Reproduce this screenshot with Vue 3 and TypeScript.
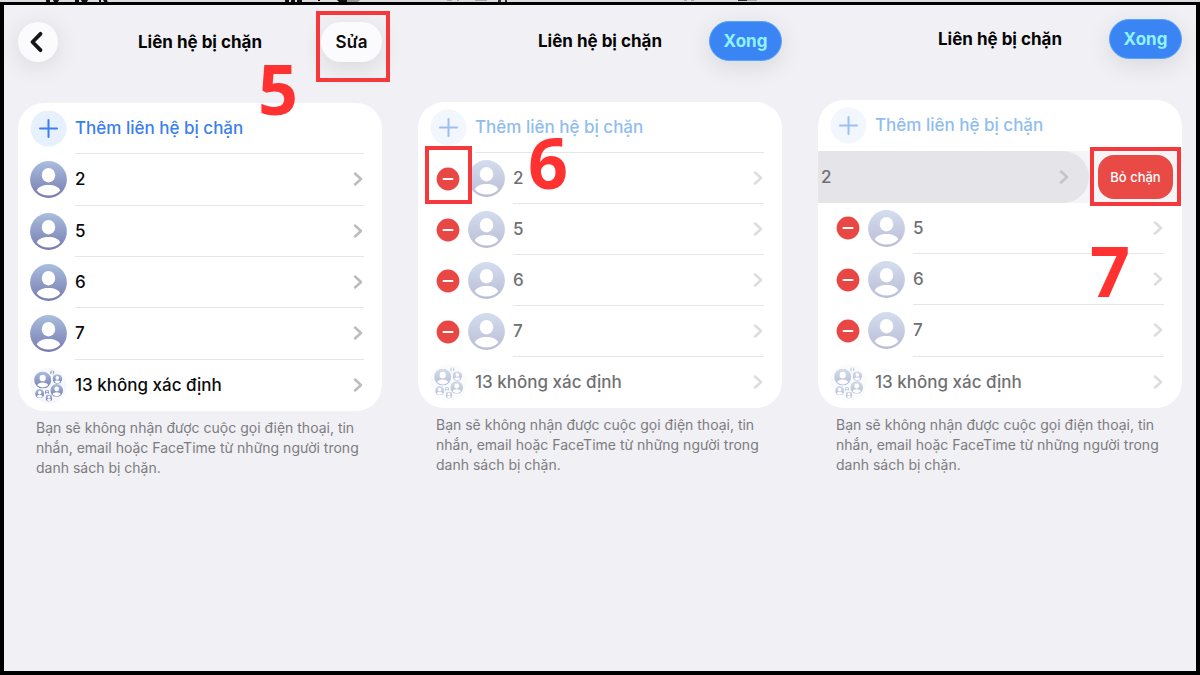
<script setup lang="ts">
interface Contact {
  name: string
  swiped?: boolean
  boxed?: boolean
}

interface Panel {
  id: string
  editing: boolean
  step: string
  contacts: Contact[]
}

interface Bubble {
  x: number
  y: number
  r: number
}

const panels: Panel[] = [
  {
    id: 'view',
    editing: false,
    step: '5',
    contacts: [{ name: '2' }, { name: '5' }, { name: '6' }, { name: '7' }],
  },
  {
    id: 'edit',
    editing: true,
    step: '6',
    contacts: [{ name: '2', boxed: true }, { name: '5' }, { name: '6' }, { name: '7' }],
  },
  {
    id: 'confirm',
    editing: true,
    step: '7',
    contacts: [{ name: '2', swiped: true }, { name: '5' }, { name: '6' }, { name: '7' }],
  },
]

const bubbles: Bubble[] = [
  { x: 12.7, y: 13, r: 8.6 },
  { x: 27.3, y: 12, r: 4.8 },
  { x: 22.3, y: 5.4, r: 2.2 },
  { x: 26.7, y: 23.4, r: 6.4 },
  { x: 9.7, y: 26.7, r: 4.6 },
  { x: 17, y: 25, r: 2.2 },
  { x: 19, y: 31, r: 3.4 },
]
</script>

<template>
  <div class="page">
    <svg class="defs" width="0" height="0" aria-hidden="true">
      <defs>
        <linearGradient id="avatar-fill" x1="0" y1="0" x2="0" y2="1">
          <stop offset="0" stop-color="#a9bedd" />
          <stop offset="1" stop-color="#777bb0" />
        </linearGradient>
        <symbol id="avatar" viewBox="0 0 37 37">
          <circle cx="18.5" cy="18.5" r="18.4" fill="url(#avatar-fill)" />
          <ellipse cx="18.5" cy="14.2" rx="6.7" ry="7.2" fill="#fff" />
          <path
            d="M6.8 29.4C8 26 12.6 24 18.5 24s10.500 2 11.700 5.400C27.400 32.700 23.200 34.600 18.500 34.600S9.600 32.700 6.800 29.400z"
            fill="#fff"
          />
        </symbol>
      </defs>
    </svg>

    <div class="strip">
      <svg width="400" height="3" viewBox="0 0 400 3" aria-hidden="true">
        <path
          d="M46 0h4v2h-4zM53 0h6l-1 2h-4zM75 0h4v2h-4zM81 0h7l-1 2h-5zM99 0h2v3h-2zM103 0h4l1 3h-3z M285 0h4v2h-4zM291 0h4v2h-4zM297 0h5v2h-5zM318 0h2v1h-2zM337 0h10v2h-8z"
          fill="#111"
        />
        <path d="M347 0h13l-2 2h-11z" fill="#999" />
      </svg>
      <svg width="400" height="3" viewBox="0 0 400 3" aria-hidden="true">
        <path d="M47 0h5v1h-5zM57 0h2v1h-2zM75 0h12v1h-12zM284 0h3v1h-3zM291 0h3v1h-3zM347 0h10v1h-10z" fill="#a8a8ac" />
        <path d="M98 0h3v2h-3zM105 0h2v2h-2zM338 0h9v1h-9z" fill="#333" />
      </svg>
    </div>

    <main class="frame">
      <section v-for="panel in panels" :key="panel.id" class="panel" :class="panel.id">
        <header class="bar">
          <button v-if="!panel.editing" class="back" type="button" aria-label="Quay lại">
            <svg width="20" height="24" viewBox="0 0 20 24" aria-hidden="true">
              <path d="M12.500 3.800 4.500 12l8 8.200" fill="none" stroke="#151517" stroke-width="3.800" stroke-linecap="round" stroke-linejoin="round" />
            </svg>
          </button>
          <h1 class="title">Liên hệ bị chặn</h1>
          <div class="action">
            <button v-if="panel.editing" class="pill done" type="button">Xong</button>
            <button v-else class="pill modify" type="button">Sửa</button>
            <span v-if="!panel.editing" class="mark mark-modify"></span>
          </div>
        </header>

        <ul class="card" :class="{ editing: panel.editing }">
          <li class="row">
            <button class="add" type="button">
              <svg class="round" width="37" height="37" viewBox="0 0 37 37" aria-hidden="true">
                <circle cx="18.5" cy="18.5" r="18" fill="#e6f1fd" />
                <path d="M18.500 10v17M10 18.500h17" stroke="#3a80ea" stroke-width="2" stroke-linecap="round" />
              </svg>
              <span>Thêm liên hệ bị chặn</span>
            </button>
          </li>
          <li
            v-for="contact in panel.contacts"
            :key="contact.name"
            class="row"
            :class="{ swiped: contact.swiped }"
          >
            <template v-if="contact.swiped">
              <a class="line slid" href="#">
                <span class="name">{{ contact.name }}</span>
                <svg class="chevron" width="10" height="16" viewBox="0 0 10 16" aria-hidden="true">
                  <path d="M2 2.500 8 8l-6 5.500" />
                </svg>
              </a>
              <div class="action">
                <button class="unblock" type="button">Bỏ chặn</button>
                <span class="mark mark-unblock"></span>
              </div>
            </template>
            <template v-else>
              <button v-if="panel.editing" class="minus" type="button" :aria-label="'Xóa ' + contact.name">
                <svg width="24" height="24" viewBox="0 0 24 24" aria-hidden="true">
                  <circle cx="12" cy="12" r="11.400" fill="#e94743" />
                  <path d="M7.500 12h9" stroke="#fff" stroke-width="2" stroke-linecap="round" />
                </svg>
                <span v-if="contact.boxed" class="mark mark-minus"></span>
              </button>
              <svg class="round" width="37" height="37" aria-hidden="true"><use href="#avatar" /></svg>
              <a class="line" href="#">
                <span class="name">{{ contact.name }}</span>
                <svg class="chevron" width="10" height="16" viewBox="0 0 10 16" aria-hidden="true">
                  <path d="M2 2.500 8 8l-6 5.500" />
                </svg>
              </a>
            </template>
          </li>
          <li class="row">
            <svg class="round" width="37" height="37" viewBox="0 0 37 37" aria-hidden="true">
              <circle cx="18.5" cy="18.5" r="18" fill="#f7f8fb" />
              <use
                v-for="(b, i) in bubbles"
                :key="i"
                href="#avatar"
                :x="b.x - b.r"
                :y="b.y - b.r"
                :width="b.r * 2"
                :height="b.r * 2"
              />
            </svg>
            <a class="line" href="#">
              <span class="name">13 không xác định</span>
              <svg class="chevron" width="10" height="16" viewBox="0 0 10 16" aria-hidden="true">
                <path d="M2 2.500 8 8l-6 5.500" />
              </svg>
            </a>
          </li>
        </ul>

        <p class="note">
          Bạn sẽ không nhận được cuộc gọi điện thoại, tin nhắn, email hoặc FaceTime từ những người trong danh sách bị chặn.
        </p>

        <strong class="step">{{ panel.step }}</strong>
      </section>
    </main>
  </div>
</template>

<style>
body {
  margin: 0;
  background: #000;
}
</style>

<style scoped>
.page {
  display: flex;
  flex-direction: column;
  min-height: 100vh;
  overflow: hidden;
  background: #000;
  color: #0b0b0c;
  font-family: Inter, "Liberation Sans", sans-serif;
}

.defs {
  position: absolute;
}

.strip {
  display: flex;
  height: 2px;
  background: #dcdce0;
}

.strip svg {
  flex: none;
}

.frame {
  display: grid;
  flex: 1;
  grid-template-columns: repeat(3, 1fr);
  gap: 36px;
  box-sizing: border-box;
  margin: 3px 4px 4px;
  padding: 0 14px;
  background: #f1f0f5;
}

.panel {
  position: relative;
  min-width: 0;
}

.panel.view {
  padding-top: 17px;
}

.panel.edit {
  padding-top: 16px;
}

.panel.confirm {
  padding-top: 14px;
}

.bar {
  display: grid;
  grid-template-columns: 1fr auto 1fr;
  align-items: center;
  height: 40px;
  margin-bottom: 41px;
}

button {
  margin: 0;
  padding: 0;
  border: 0;
  background: none;
  color: inherit;
  font: inherit;
  cursor: pointer;
}

a {
  color: inherit;
  text-decoration: none;
}

.back {
  display: flex;
  align-items: center;
  justify-content: center;
  grid-column: 1;
  width: 40px;
  height: 40px;
  border-radius: 50%;
  background: #fbfbfe;
  box-shadow: 0 4px 24px rgba(0, 0, 0, 0.1);
}

.title {
  grid-column: 2;
  margin: 0;
  color: #050505;
  font-size: 17px;
  font-weight: 700;
  line-height: 24px;
  white-space: nowrap;
}

.action {
  position: relative;
  justify-self: end;
  grid-column: 3;
}

.pill {
  display: block;
  height: 40px;
  border-radius: 20px;
  box-shadow: 0 6px 24px rgba(0, 0, 0, 0.1);
  font-size: 17px;
}

.modify {
  width: 61px;
  background: #fbfbfe;
  font-weight: 600;
}

.done {
  box-sizing: border-box;
  width: 73px;
  border: 1px solid #58a6fa;
  background: #3b84f4;
  color: #90f3ff;
  font-weight: 700;
}

.card {
  display: grid;
  grid-template-rows: repeat(6, 1fr);
  min-height: 308px;
  margin: 0;
  padding: 0;
  border-radius: 26px;
  background: #fff;
  list-style: none;
}

.edit .card {
  min-height: 306px;
}

.row {
  display: flex;
  align-items: center;
  min-width: 0;
  padding: 0 18px 0 12px;
  font-size: 17px;
  font-weight: 500;
}

.round {
  flex: none;
  margin-right: 8px;
}

.add {
  display: flex;
  flex: 1;
  align-items: center;
  align-self: stretch;
  color: #3a80ea;
  text-align: left;
}

.add span {
  display: flex;
  flex: 1;
  align-items: center;
  align-self: stretch;
  border-bottom: 1px solid #e6e6e8;
}

.line {
  display: flex;
  flex: 1;
  align-items: center;
  align-self: stretch;
  justify-content: space-between;
  border-bottom: 1px solid #e6e6e8;
}

.row:last-child .line {
  border-bottom-color: transparent;
}

.chevron {
  margin-right: 1px;
  fill: none;
  stroke: #bcbcbf;
  stroke-width: 2.5;
  stroke-linecap: round;
  stroke-linejoin: round;
}

.editing .name {
  color: #707073;
}

.editing .add {
  color: #8fbdf0;
}

.editing .round,
.editing .chevron {
  opacity: 0.5;
}

.minus {
  position: relative;
  flex: none;
  height: 24px;
  margin: 0 8px 0 6px;
}

.minus svg {
  display: block;
}

.swiped {
  padding: 0 9px 0 0;
  background: #f5f5f8;
}

.slid {
  margin-right: 9px;
  padding: 0 20px 0 3px;
  border-bottom: 0;
  border-radius: 0 26px 26px 0;
  background: #e5e4e9;
}

.editing .slid .chevron {
  margin-right: 0;
  opacity: 0.8;
}

.confirm .add span {
  border-bottom-color: transparent;
}

.unblock {
  display: block;
  width: 75px;
  height: 44px;
  border-radius: 16px;
  background: #e94a46;
  color: #fff;
  font-size: 13px;
  font-weight: 500;
}

.note {
  margin: 7px 18px 0;
  color: #7c7c80;
  font-size: 14px;
  font-weight: 400;
  line-height: 20px;
}

.mark {
  position: absolute;
  z-index: 1;
  border: 4px solid #f5383c;
  pointer-events: none;
}

.mark-modify {
  inset: -11px -8px -20px -5px;
}

.mark-minus {
  inset: -21px -12px -13px -11px;
}

.mark-unblock {
  inset: -8px -8px -7px -8px;
}

.step {
  position: absolute;
  z-index: 2;
  color: #ff3131;
  font-family: "Noto Sans", "Open Sans", sans-serif;
  font-size: 70px;
  font-weight: 700;
  line-height: 1;
}

.view .step {
  top: 48px;
  left: 240px;
}

.edit .step {
  top: 122px;
  left: 110px;
}

.confirm .step {
  top: 230px;
  left: 272px;
}
</style>
